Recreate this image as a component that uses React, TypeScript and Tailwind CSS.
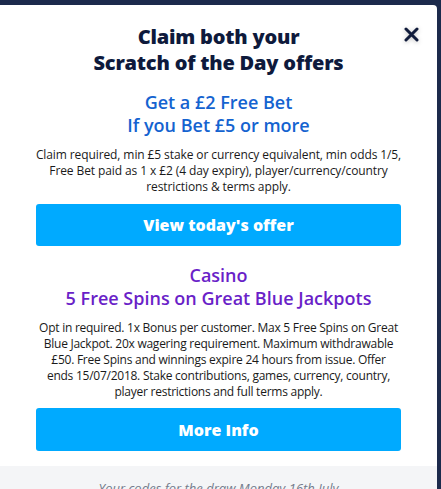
import React from 'react';

const font = { fontFamily: '"Open Sans", "Noto Sans", sans-serif' };

const App = () => {
  return (
    <div className="w-[441px] h-[489px] overflow-hidden bg-[#1c2a4c] pt-[5px]" style={font}>
      <div className="relative w-[437px] h-[484px] bg-white rounded-tr-[4px] overflow-hidden flex flex-col">
        {/* Close button */}
        <button className="absolute top-[17px] right-[14px] w-6 h-6 flex items-center justify-center" aria-label="Close">
          <svg width="15" height="15" viewBox="0 0 15 15" className="drop-shadow-[0_1px_2px_rgba(0,0,0,0.25)]">
            <path d="M2 2 L13 13 M13 2 L2 13" stroke="#101b3b" strokeWidth="3" strokeLinecap="round" />
          </svg>
        </button>

        <div className="px-[33px] pt-[19px] flex flex-col items-center text-center">
          <h1 className="text-[20px] leading-[26px] font-extrabold text-[#0e1a3c] tracking-[-0.2px]">
            Claim both your
            <br />
            Scratch of the Day offers
          </h1>

          <h2 className="mt-[15px] text-[18px] leading-[23px] font-semibold text-[#1463d0]">
            Get a £2 Free Bet
            <br />
            If you Bet £5 or more
          </h2>
          <p className="mt-[10px] text-[12px] leading-[16px] text-[#1a1a1a] tracking-[-0.1px]">
            Claim required, min £5 stake or currency equivalent, min odds 1/5,
            <br />
            Free Bet paid as 1 x £2 (4 day expiry), player/currency/country
            <br />
            restrictions &amp; terms apply.
          </p>
          <button className="mt-[9px] w-[365px] h-[42px] rounded-[3px] bg-[#00aaff] text-white text-[16px] font-extrabold">
            View today's offer
          </button>

          <h2 className="mt-[18px] text-[18px] leading-[23px] font-semibold text-[#6a1fc8]">
            Casino
            <br />
            5 Free Spins on Great Blue Jackpots
          </h2>
          <p className="mt-[10px] text-[12px] leading-[16px] text-[#1a1a1a] tracking-[-0.25px] whitespace-nowrap">
            Opt in required. 1x Bonus per customer. Max 5 Free Spins on Great
            <br />
            Blue Jackpot. 20x wagering requirement. Maximum withdrawable
            <br />
            £50. Free Spins and winnings expire 24 hours from issue. Offer
            <br />
            ends 15/07/2018. Stake contributions, games, currency, country,
            <br />
            player restrictions and full terms apply.
          </p>
          <button className="mt-[8px] w-[365px] h-[43px] rounded-[3px] bg-[#00aaff] text-white text-[16px] font-extrabold">
            More Info
          </button>
        </div>

        <div className="mt-[15px] flex-1 bg-[#f4f5f7] pt-[13px] text-center">
          <p className="text-[13px] italic text-[#737b8c]">Your codes for the draw Monday 16th July</p>
        </div>
      </div>
    </div>
  );
};

export default App;
